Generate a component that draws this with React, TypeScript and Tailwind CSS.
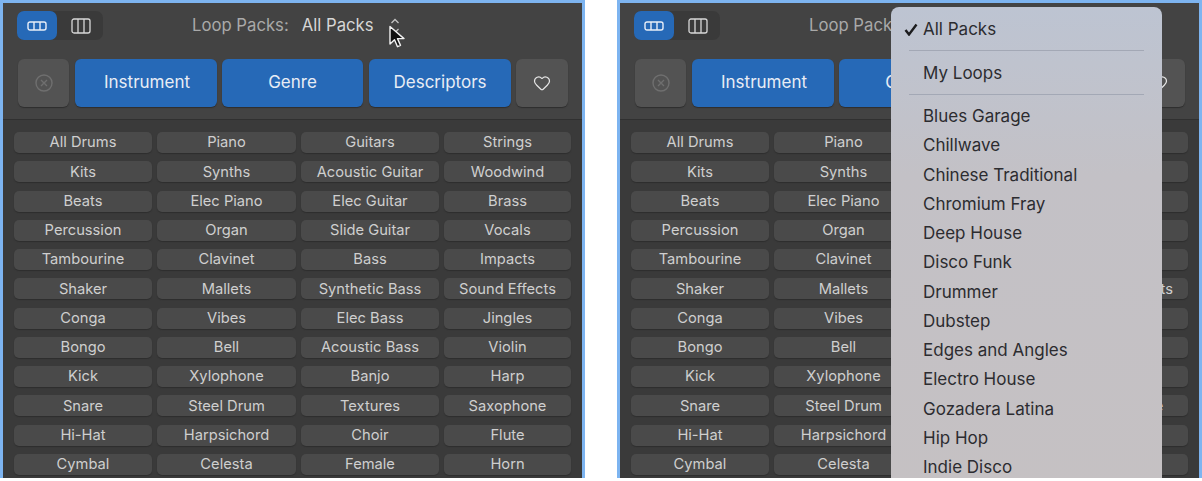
import React from 'react'
import { Heart } from 'lucide-react'

const pads = [
  'All Drums', 'Piano', 'Guitars', 'Strings',
  'Kits', 'Synths', 'Acoustic Guitar', 'Woodwind',
  'Beats', 'Elec Piano', 'Elec Guitar', 'Brass',
  'Percussion', 'Organ', 'Slide Guitar', 'Vocals',
  'Tambourine', 'Clavinet', 'Bass', 'Impacts',
  'Shaker', 'Mallets', 'Synthetic Bass', 'Sound Effects',
  'Conga', 'Vibes', 'Elec Bass', 'Jingles',
  'Bongo', 'Bell', 'Acoustic Bass', 'Violin',
  'Kick', 'Xylophone', 'Banjo', 'Harp',
  'Snare', 'Steel Drum', 'Textures', 'Saxophone',
  'Hi-Hat', 'Harpsichord', 'Choir', 'Flute',
  'Cymbal', 'Celesta', 'Female', 'Horn',
]

const packs = [
  'Blues Garage', 'Chillwave', 'Chinese Traditional', 'Chromium Fray', 'Deep House', 'Disco Funk',
  'Drummer', 'Dubstep', 'Edges and Angles', 'Electro House', 'Gozadera Latina', 'Hip Hop', 'Indie Disco',
]

function ColumnsIcon({ wide }: { wide?: boolean }) {
  return wide ? (
    <svg width="20" height="16" viewBox="0 0 20 16" fill="none" stroke="#d8d8d8" strokeWidth="1.3">
      <rect x="1" y="1" width="18" height="14" rx="2" />
      <path d="M7 1v14M13 1v14" />
    </svg>
  ) : (
    <svg width="20" height="10" viewBox="0 0 20 10" fill="none" stroke="#e8eef8" strokeWidth="1.4">
      <rect x="1" y="1" width="18" height="8" rx="2" />
      <path d="M7 1v8M13 1v8" />
    </svg>
  )
}

function Panel({ open }: { open?: boolean }) {
  return (
    <div className="relative w-[585px] h-[478px] overflow-hidden border-[3px] border-b-0 border-[#7db4f0] bg-[#3a3a3a]">
      <div className="h-[117px] bg-[#434343] border-b border-[#303030]">
        <div className="flex items-center pl-[14px] pt-[8px]">
          <div className="flex w-[86px] h-[29px] rounded-[7px] bg-[#3a3a3a]">
            <div className="w-[40px] h-full rounded-[7px] bg-[#2669b7] flex items-center justify-center">
              <ColumnsIcon />
            </div>
            <div className="w-[46px] h-full flex items-center justify-center pl-[2px]">
              <ColumnsIcon wide />
            </div>
          </div>
          <span className="ml-[89px] text-[16.7px] leading-[29px] text-[#a9a9a9]">Loop Packs:</span>
          <span className="ml-[13px] text-[16.7px] leading-[29px] text-[#d6d6d6]">All Packs</span>
          <svg width="10" height="18" viewBox="0 0 10 18" fill="none" stroke="#c4c4c4" strokeWidth="1.3" className="ml-[16px]">
            <path d="M1.5 6L5 2.5 8.5 6M1.5 12L5 15.5 8.5 12" />
          </svg>
        </div>
        <div className="flex items-center h-[48px] mt-[19px] pl-[15px] text-[17px] text-[#e8edf5]">
          <div className="w-[51px] h-full rounded-[6px] bg-[#535353] shadow-[0_1px_1px_#2e2e2e] flex items-center justify-center">
            <svg width="18" height="18" viewBox="0 0 18 18" fill="none" stroke="#6f6f6f" strokeWidth="1.4">
              <circle cx="9" cy="9" r="8" />
              <path d="M6 6l6 6M12 6l-6 6" />
            </svg>
          </div>
          <div className="ml-[6px] w-[142px] h-full pb-[1px] pl-[2px] rounded-[6px] bg-[#2669b7] shadow-[0_1px_1px_#2e2e2e] flex items-center justify-center">Instrument</div>
          <div className="ml-[5px] w-[141px] h-full pb-[1px] rounded-[6px] bg-[#2669b7] shadow-[0_1px_1px_#2e2e2e] flex items-center justify-center">Genre</div>
          <div className="ml-[6px] w-[142px] h-full pb-[1px] rounded-[6px] bg-[#2669b7] shadow-[0_1px_1px_#2e2e2e] flex items-center justify-center">Descriptors</div>
          <div className="ml-[5px] w-[52px] h-full rounded-[6px] bg-[#535353] shadow-[0_1px_1px_#2e2e2e] flex items-center justify-center">
            <Heart size={18} strokeWidth={1.6} color="#e6e6e6" />
          </div>
        </div>
      </div>
      <div className="grid grid-cols-[138px_139px_138px_127px] auto-rows-[21px] gap-x-[5px] gap-y-[8.25px] pl-[11px] pt-[12px] text-[14.7px] text-[#cfcfcf]">
        {pads.map((p) => (
          <div key={p} className="rounded-[5px] bg-[#4a4a4a] shadow-[0_1px_1px_#2e2e2e] flex items-center justify-center">{p}</div>
        ))}
      </div>
      {open && (
        <div className="absolute left-[271px] top-[4px] w-[271px] h-[480px] rounded-t-[8px] bg-gradient-to-b from-[#bdc4d2] via-[#c3c1c6] via-35% to-[#c5c1c3] pl-[32px] text-[17px] text-[#2c2c30]">
          <svg width="14" height="13" viewBox="0 0 14 13" fill="none" stroke="#1c1c1e" strokeWidth="2.4" className="absolute left-[13px] top-[16px]">
            <path d="M1.5 7L5 11.5 12.5 1.5" />
          </svg>
          <div className="h-[29px] mt-[8px] leading-[29px]">All Packs</div>
          <div className="-ml-[14px] mr-[18px] mt-[6px] h-px bg-[#a3a8b5]" />
          <div className="h-[29px] mt-[8px] leading-[29px]">My Loops</div>
          <div className="-ml-[14px] mr-[18px] mt-[6px] h-px bg-[#a3a8b5]" />
          <div className="mt-[7px] flex flex-col">
            {packs.map((p) => (
              <div key={p} className="h-[29.25px] leading-[29px]">{p}</div>
            ))}
          </div>
        </div>
      )}
      {!open && (
        <svg width="18" height="25" viewBox="0 0 18 25" className="absolute left-[385px] top-[22px]">
          <path d="M2 1.5V19l4.5-4.3 3 7 3-1.3-3-6.8H16z" fill="#111" stroke="#f2f2f2" strokeWidth="1.4" strokeLinejoin="round" />
        </svg>
      )}
    </div>
  )
}

export default function App() {
  return (
    <div className="w-[1202px] h-[481px] bg-white flex gap-[32px] overflow-hidden font-['Inter',sans-serif]">
      <Panel />
      <Panel open />
    </div>
  )
}
